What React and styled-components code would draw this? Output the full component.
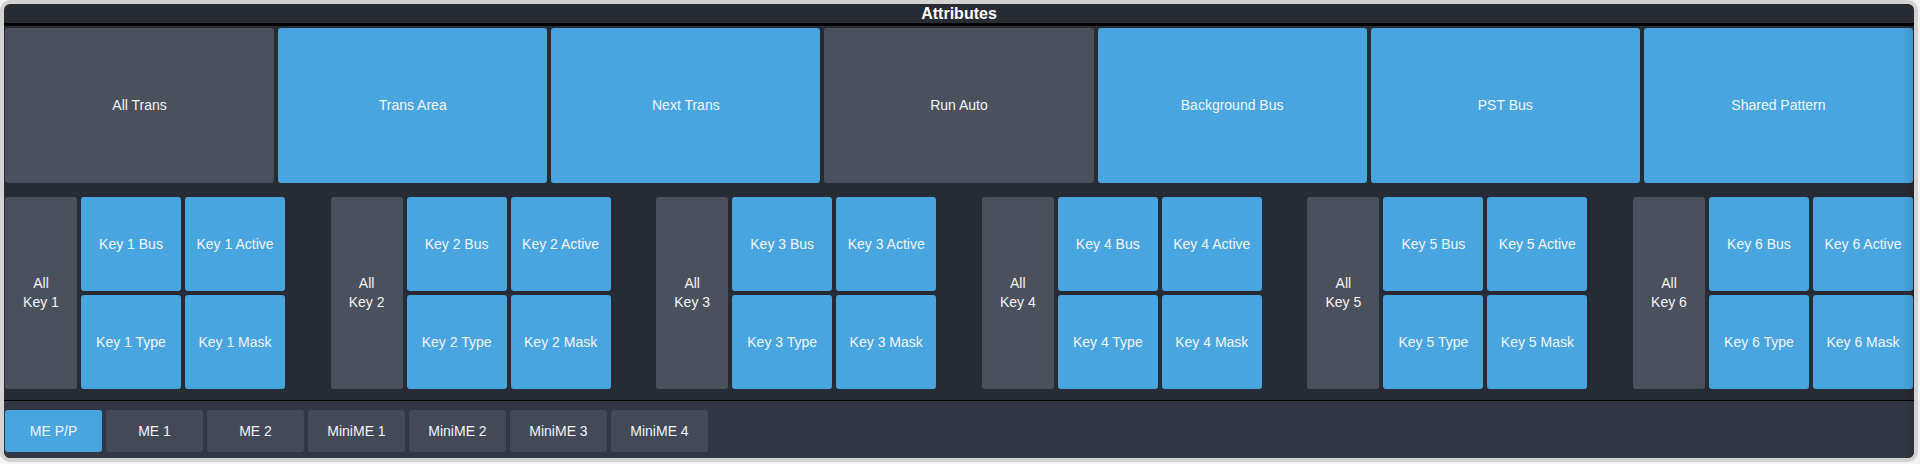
import React from "react";
import styled, { createGlobalStyle } from "styled-components";

const GlobalStyle = createGlobalStyle`
  html, body {
    margin: 0;
    padding: 0;
    background: #f4f4f4;
  }
  body {
    font-family: "Liberation Sans", Arial, sans-serif;
  }
`;

const Frame = styled.div`
  box-sizing: border-box;
  width: 1918px;
  height: 462px;
  border: 4px solid #d3d3d3;
  border-radius: 10px;
  background: #272b33;
  overflow: hidden;
  display: flex;
  flex-direction: column;
`;

const TitleBar = styled.div`
  height: 19px;
  line-height: 19px;
  border-bottom: 3px solid #000;
  text-align: center;
  color: #ffffff;
  font-size: 16px;
  font-weight: bold;
`;

const Body = styled.div`
  position: relative;
  display: flex;
  flex-direction: column;
  flex: 1;
  padding: 2px 1px 0 1px;

  &::after {
    content: "";
    position: absolute;
    top: 0;
    right: 0;
    bottom: 0;
    width: 12px;
    background: linear-gradient(to right, rgba(0, 0, 0, 0), rgba(0, 0, 0, 0.1));
    pointer-events: none;
  }
`;

const TopRow = styled.div`
  display: flex;
  gap: 4px;
  height: 155px;
`;

const Pad = styled.div`
  display: flex;
  align-items: center;
  justify-content: center;
  text-align: center;
  border-radius: 3px;
  background: ${(p) => (p.$on ? "#48a5e0" : "#4a505c")};
  color: #f2f5f8;
  font-size: 14px;
  line-height: 19px;
  flex: ${(p) => (p.$grow ? 1 : "none")};
  grid-row: ${(p) => (p.$tall ? "span 2" : "auto")};
`;

const KeyRow = styled.div`
  display: flex;
  justify-content: space-between;
  margin-top: 14px;
  height: 192px;
`;

const KeyGroup = styled.div`
  display: grid;
  grid-template-columns: 72px 100px 100px;
  grid-template-rows: 94px 94px;
  gap: 4px;
  width: 280px;
`;

const Divider = styled.div`
  margin: 11px -1px 0 -1px;
  height: 1px;
  background: #000;
`;

const TabBar = styled.div`
  flex: 1;
  display: flex;
  gap: 4px;
  margin: 0 -1px;
  padding: 9px 1px 0 1px;
  background: #323745;
`;

const Tab = styled.div`
  width: 97px;
  height: 42px;
  display: flex;
  align-items: center;
  justify-content: center;
  border-radius: 3px;
  background: ${(p) => (p.$active ? "#48a5e0" : "#434957")};
  color: #f2f5f8;
  font-size: 14px;
`;

const topButtons = [
  { label: "All Trans", on: false },
  { label: "Trans Area", on: true },
  { label: "Next Trans", on: true },
  { label: "Run Auto", on: false },
  { label: "Background Bus", on: true },
  { label: "PST Bus", on: true },
  { label: "Shared Pattern", on: true },
];

const keys = [1, 2, 3, 4, 5, 6];

const tabs = ["ME P/P", "ME 1", "ME 2", "MiniME 1", "MiniME 2", "MiniME 3", "MiniME 4"];

const App = () => {
  return (
    <>
      <GlobalStyle />
      <Frame>
        <TitleBar>Attributes</TitleBar>
        <Body>
          <TopRow>
            {topButtons.map((b) => (
              <Pad key={b.label} $on={b.on} $grow>
                {b.label}
              </Pad>
            ))}
          </TopRow>
          <KeyRow>
            {keys.map((n) => (
              <KeyGroup key={n}>
                <Pad $tall>
                  All
                  <br />
                  Key {n}
                </Pad>
                <Pad $on>Key {n} Bus</Pad>
                <Pad $on>Key {n} Active</Pad>
                <Pad $on>Key {n} Type</Pad>
                <Pad $on>Key {n} Mask</Pad>
              </KeyGroup>
            ))}
          </KeyRow>
          <Divider />
          <TabBar>
            {tabs.map((t, i) => (
              <Tab key={t} $active={i === 0}>
                {t}
              </Tab>
            ))}
          </TabBar>
        </Body>
      </Frame>
    </>
  );
};

export default App;
